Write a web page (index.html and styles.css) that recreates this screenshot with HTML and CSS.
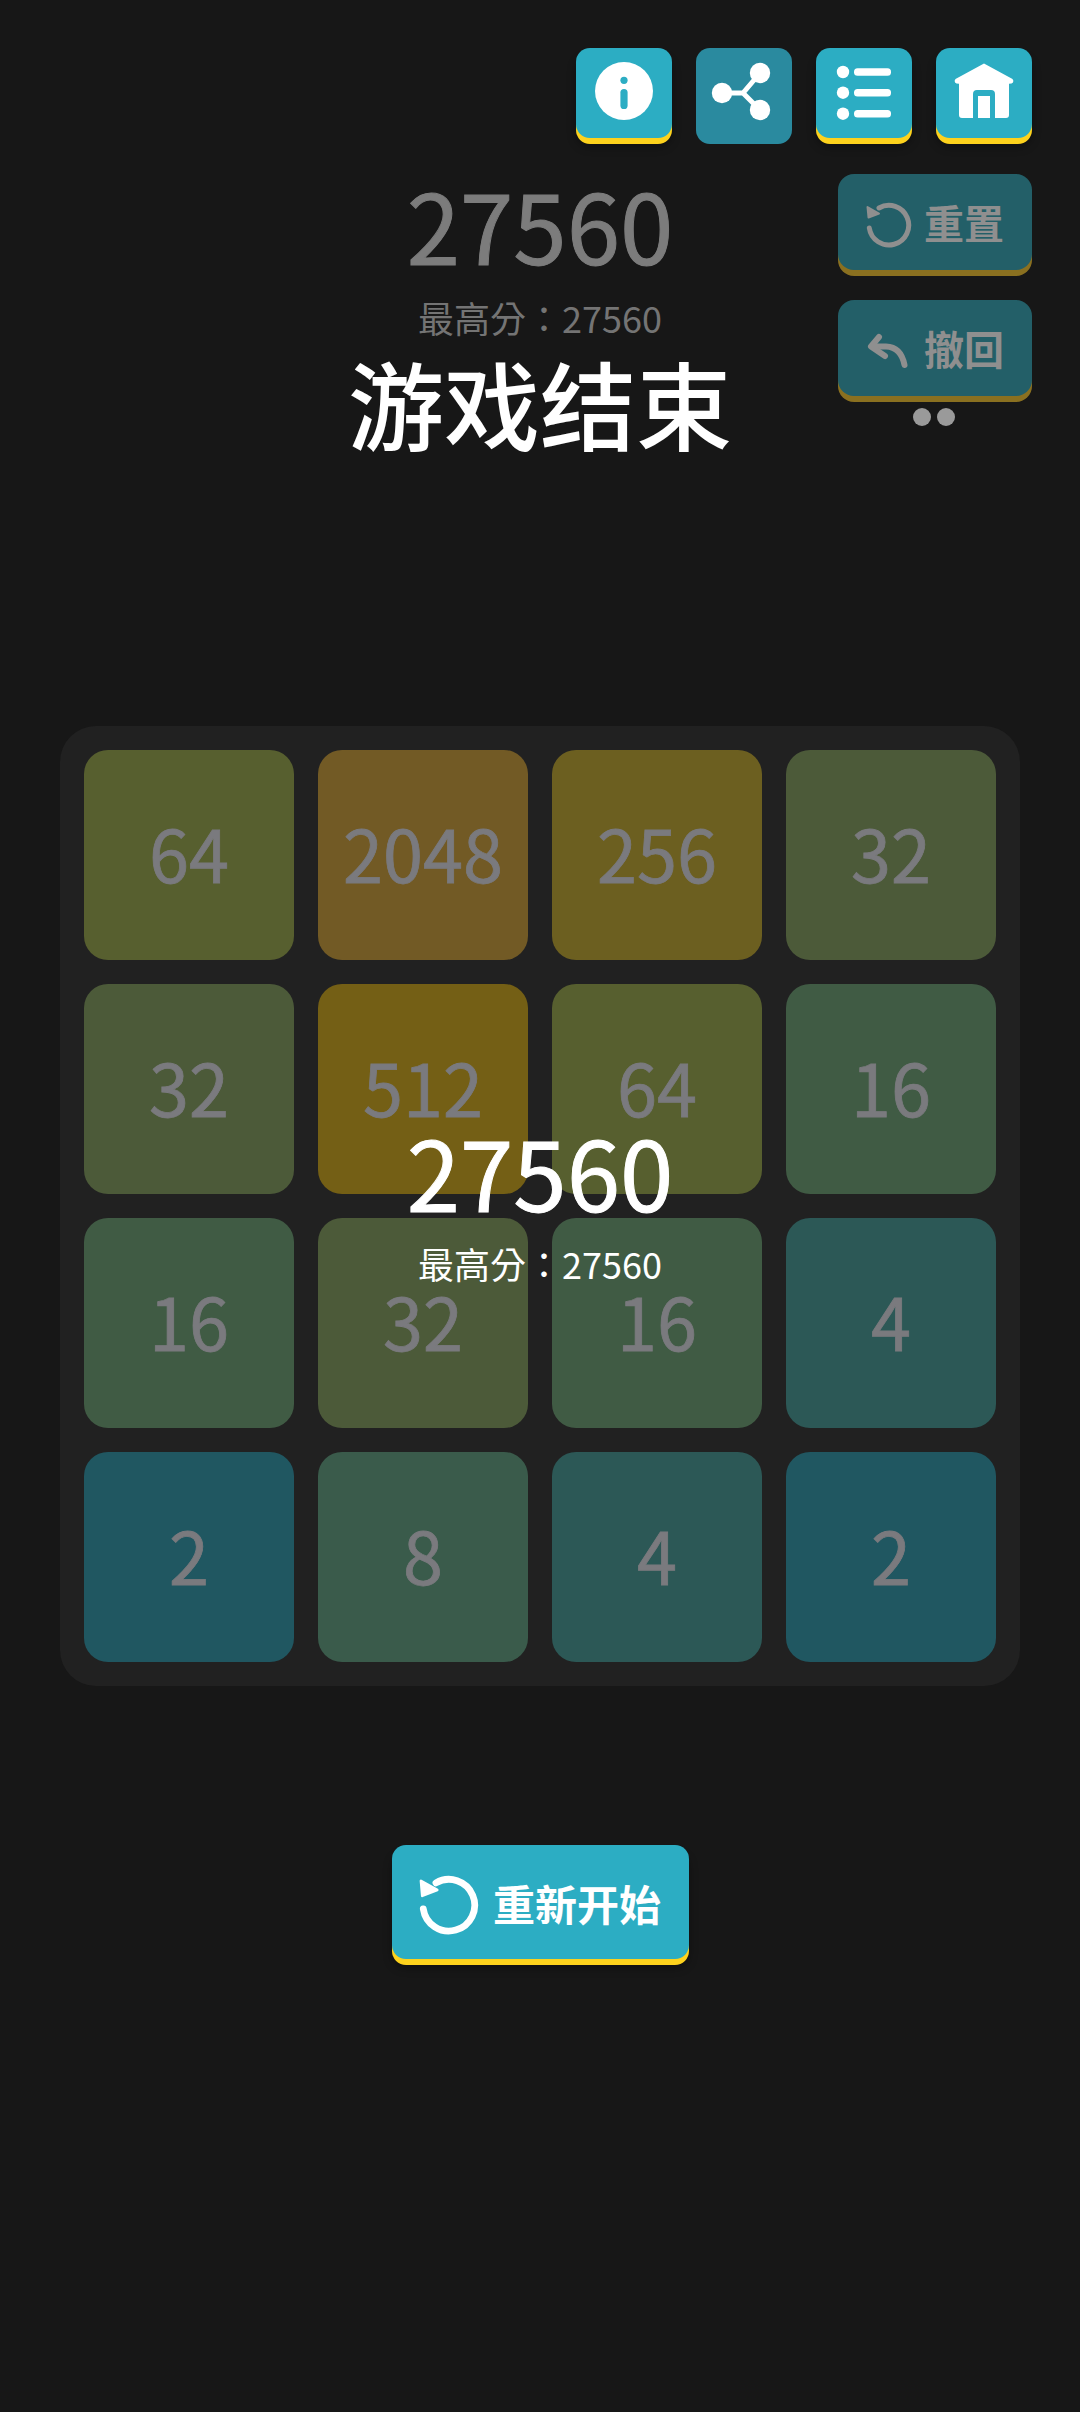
FILE: index.html
```html
<!DOCTYPE html>
<html lang="zh">
<head>
<meta charset="utf-8">
<title>2048</title>
<link rel="stylesheet" href="styles.css">
</head>
<body>
<div class="page">
  <nav class="topbar">
    <div class="icon-btn">
      <svg viewBox="0 0 96 90" width="96" height="90"><circle cx="48" cy="43" r="29" fill="#fff"/><circle cx="48" cy="32.300" r="3.600" fill="#2cadc3"/><rect x="44.400" y="41" width="7.200" height="20" rx="3.600" fill="#2cadc3"/></svg>
    </div>
    <div class="icon-btn icon-btn-off">
      <svg viewBox="0 0 96 96" width="96" height="96"><path d="M26 45H47L64 25M47 45L64 62" fill="none" stroke="#fff" stroke-width="5"/><circle cx="64" cy="25" r="10.200" fill="#fff"/><circle cx="26" cy="45" r="10.200" fill="#fff"/><circle cx="64" cy="62" r="10.200" fill="#fff"/></svg>
    </div>
    <div class="icon-btn">
      <svg viewBox="0 0 96 90" width="96" height="90"><g fill="#fff"><circle cx="27" cy="24" r="6.200"/><circle cx="27" cy="44.700" r="6.200"/><circle cx="27" cy="65.700" r="6.200"/><rect x="38" y="20.300" width="37" height="7.400" rx="3.500"/><rect x="38" y="41" width="37" height="7.400" rx="3.500"/><rect x="38" y="62" width="37" height="7.400" rx="3.500"/></g></svg>
    </div>
    <div class="icon-btn">
      <svg viewBox="0 0 96 90" width="96" height="90"><path d="M48 15.500L76.500 31Q78 32.500 77 34.500Q76 35.700 73 35.700V67Q73 70 70 70H26Q23 70 23 67V35.700Q20 35.700 19 34.500Q18 32.500 19.500 31Z" fill="#fff"/><path d="M37 70V46Q37 42 41 42H55Q59 42 59 46V70H54V48H42V70Z" fill="#2cadc3"/></svg>
    </div>
  </nav>

  <header class="summary">
    <div class="summary-side"></div>
    <div class="scores">
      <div class="score score-dim">27560</div>
      <div class="best best-dim" lang="zh-TW">最高分：27560</div>
      <h1 class="title">游戏结束</h1>
    </div>
    <div class="summary-side actions">
      <div class="action">
        <svg class="action-icon" viewBox="0 -6 46 52" width="46" height="52"><path d="M13 6A19.800 19.800 0 1 1 3.300 26" fill="none" stroke="#8f8f8f" stroke-width="5" stroke-linecap="round"/><path d="M1.500 5L2.500 15.500L13 11.500Z" fill="#8f8f8f" stroke="#8f8f8f" stroke-width="2" stroke-linejoin="round"/></svg>
        <span>重置</span>
      </div>
      <div class="action">
        <svg class="action-icon" viewBox="0 0 46 46" width="46" height="46"><path d="M8 21.500H20Q35 22 38.500 40" fill="none" stroke="#8f8f8f" stroke-width="6" stroke-linecap="round"/><path d="M13 12L5 21.500L19 31" fill="none" stroke="#8f8f8f" stroke-width="6" stroke-linecap="round" stroke-linejoin="round"/></svg>
        <span>撤回</span>
      </div>
      <div class="dots"><i></i><i></i></div>
    </div>
  </header>

  <main class="board">
    <div class="tile c64">64</div>
    <div class="tile c2048">2048</div>
    <div class="tile c256">256</div>
    <div class="tile c32">32</div>
    <div class="tile c32">32</div>
    <div class="tile c512">512</div>
    <div class="tile c64">64</div>
    <div class="tile c16">16</div>
    <div class="tile c16">16</div>
    <div class="tile c32">32</div>
    <div class="tile c16">16</div>
    <div class="tile c4">4</div>
    <div class="tile c2">2</div>
    <div class="tile c8">8</div>
    <div class="tile c4">4</div>
    <div class="tile c2">2</div>
    <div class="final">
      <div class="score">27560</div>
      <div class="best" lang="zh-TW">最高分：27560</div>
    </div>
  </main>

  <div class="restart-row">
    <div class="restart">
      <svg viewBox="0 -5.300 46 52" width="60" height="68"><path d="M13 6A19.800 19.800 0 1 1 3.300 26" fill="none" stroke="#fff" stroke-width="5.200" stroke-linecap="round"/><path d="M1.500 4.500L2.500 16L14 11.500Z" fill="#fff" stroke="#fff" stroke-width="2" stroke-linejoin="round"/></svg>
      <span>重新开始</span>
    </div>
  </div>
</div>
</body>
</html>
```

FILE: styles.css
```css
* { box-sizing: border-box; }

html, body {
  margin: 0;
  background: #171717;
}

body {
  font-family: "Noto Sans CJK SC", "Noto Sans", sans-serif;
  color: #fff;
}

.page {
  width: 1080px;
  height: 2412px;
  overflow: hidden;
}

.topbar {
  display: flex;
  justify-content: flex-end;
  align-items: flex-start;
  gap: 24px;
  height: 148px;
  padding: 48px 48px 0 0;
}

.icon-btn {
  width: 96px;
  height: 90px;
  border-radius: 14px;
  background: #2cadc3;
  box-shadow: 0 6px 0 #fdd21d, 0 9px 8px rgba(0, 0, 0, .35);
}

.icon-btn svg { display: block; }

.icon-btn-off {
  height: 96px;
  background: #2a8a9f;
  box-shadow: none;
}

.summary {
  display: grid;
  grid-template-columns: 1fr auto 1fr;
  height: 578px;
}

.scores {
  display: flex;
  flex-direction: column;
  align-items: center;
}

.score {
  font-size: 96px;
  line-height: 120px;
  font-weight: 400;
  -webkit-text-stroke: 1px currentColor;
}

.score-dim {
  color: #7c7c7c;
  margin-top: 16px;
}

.best {
  font-family: "Noto Sans CJK TC", "Noto Sans", sans-serif;
  font-size: 36px;
  line-height: 48px;
  margin-top: 8px;
}

.best-dim {
  color: #747474;
  margin-top: 9px;
}

.title {
  margin: 1px 0 0;
  font-size: 96px;
  line-height: 120px;
  font-weight: 500;
  color: #fff;
}

.actions {
  display: flex;
  flex-direction: column;
  align-items: flex-end;
  gap: 30px;
  padding: 26px 48px 0 0;
}

.action {
  display: flex;
  align-items: center;
  justify-content: center;
  gap: 12px;
  width: 194px;
  height: 96px;
  border-radius: 16px;
  background: #235f68;
  color: #8f8f8f;
  font-size: 40px;
  font-weight: 700;
  box-shadow: 0 6px 0 #8a7020;
}

.action-icon { flex: none; }

.dots {
  display: flex;
  gap: 6px;
  margin: -18px 77px 0 0;
}

.dots i {
  display: block;
  width: 18px;
  height: 18px;
  border-radius: 50%;
  background: #9a9a9a;
}

.board {
  position: relative;
  display: grid;
  grid-template-columns: repeat(4, 210px);
  grid-auto-rows: 210px;
  gap: 24px;
  width: 960px;
  height: 960px;
  margin: 0 auto;
  padding: 24px;
  border-radius: 36px;
  background: #212121;
}

.tile {
  display: flex;
  align-items: center;
  justify-content: center;
  padding-bottom: 8px;
  border-radius: 24px;
  color: #7a7a7e;
  font-size: 72px;
  font-weight: 400;
  -webkit-text-stroke: 0.8px currentColor;
}

.c2 { background: #205761; }
.c4 { background: #2c5856; }
.c8 { background: #3a5b4b; }
.c16 { background: #405b44; }
.c32 { background: #4c5a39; }
.c64 { background: #575f2f; }
.c256 { background: #6c5f20; }
.c512 { background: #745f15; }
.c2048 { background: #725a25; }

.final {
  position: absolute;
  left: 0;
  right: 0;
  top: 385px;
  display: flex;
  flex-direction: column;
  align-items: center;
}

.restart-row {
  display: flex;
  justify-content: center;
  margin-top: 159px;
}

.restart {
  display: flex;
  align-items: center;
  justify-content: center;
  gap: 14px;
  width: 297px;
  height: 114px;
  border-radius: 14px;
  background: #2cadc3;
  font-size: 42px;
  font-weight: 700;
  box-shadow: 0 6px 0 #fdd21d, 0 9px 8px rgba(0, 0, 0, .35);
}

.restart svg { flex: none; }
```
